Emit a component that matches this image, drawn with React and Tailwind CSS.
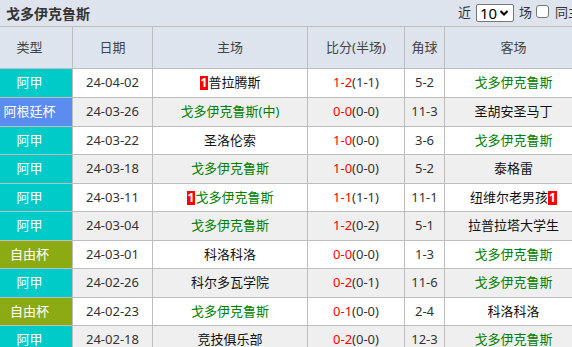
import React from 'react';

const GREEN = 'text-[#008000]';

const rows = [
  { type: '阿甲', date: '24-04-02', home: '普拉腾斯', homeBadge: true, score: '1-2', half: '(1-1)', corner: '5-2', away: '戈多伊克鲁斯', awayGreen: true },
  { type: '阿根廷杯', date: '24-03-26', home: '戈多伊克鲁斯(中)', homeGreen: true, score: '0-0', half: '(0-0)', corner: '11-3', away: '圣胡安圣马丁' },
  { type: '阿甲', date: '24-03-22', home: '圣洛伦索', score: '1-0', half: '(0-0)', corner: '3-6', away: '戈多伊克鲁斯', awayGreen: true },
  { type: '阿甲', date: '24-03-18', home: '戈多伊克鲁斯', homeGreen: true, score: '1-0', half: '(0-0)', corner: '5-2', away: '泰格雷' },
  { type: '阿甲', date: '24-03-11', home: '戈多伊克鲁斯', homeGreen: true, homeBadge: true, score: '1-1', half: '(1-1)', corner: '11-1', away: '纽维尔老男孩', awayBadge: true },
  { type: '阿甲', date: '24-03-04', home: '戈多伊克鲁斯', homeGreen: true, score: '1-2', half: '(0-2)', corner: '5-1', away: '拉普拉塔大学生' },
  { type: '自由杯', date: '24-03-01', home: '科洛科洛', score: '0-0', half: '(0-0)', corner: '1-3', away: '戈多伊克鲁斯', awayGreen: true },
  { type: '阿甲', date: '24-02-26', home: '科尔多瓦学院', score: '0-2', half: '(0-1)', corner: '11-6', away: '戈多伊克鲁斯', awayGreen: true },
  { type: '自由杯', date: '24-02-23', home: '戈多伊克鲁斯', homeGreen: true, score: '0-1', half: '(0-0)', corner: '2-4', away: '科洛科洛' },
  { type: '阿甲', date: '24-02-18', home: '竞技俱乐部', score: '0-2', half: '(0-0)', corner: '12-3', away: '戈多伊克鲁斯', awayGreen: true },
];

// row heights incl. bottom border, matching the screenshot's 28.5px rhythm
const heights = ['h-[29px]', 'h-[29px]', 'h-[28px]', 'h-[29px]', 'h-[28px]', 'h-[29px]', 'h-[28px]', 'h-[29px]', 'h-[28px]', 'h-[28px]'];

const typeBg = {
  '阿甲': 'bg-[#00cbc9]',
  '阿根廷杯': 'bg-[#5b8cf0]',
  '自由杯': 'bg-[#8cab12]',
};

const Badge = () => (
  <span className="inline-block bg-[#ff0000] text-white font-bold text-[12px] leading-[14px] px-[1px]">1</span>
);

const cell = 'flex items-center justify-center border-r border-[#bdbdbd] h-full';

export default function App() {
  return (
    <div
      className="w-[572px] h-[347px] overflow-hidden bg-white text-[13px] text-[#333]"
      style={{ fontFamily: '"Noto Sans", "Noto Sans CJK SC", sans-serif' }}
    >
      <div className="w-[600px]">
        {/* title bar */}
        <div className="flex items-center h-[27px] bg-[#dde4ee] border-b border-[#bdbdbd] pl-[6px] pr-[6px]">
          <span className="font-bold text-[#333] text-[14px]">戈多伊克鲁斯</span>
          <div className="ml-auto flex items-center whitespace-nowrap text-[#333]">
            <span>近</span>
            <span className="ml-[5px] flex items-center h-[18px] w-[38px] bg-white border border-[#767676] rounded-[2px] pl-[3px] text-[15px] text-black">
              10
              <svg className="ml-[2px]" width="10" height="8" viewBox="0 0 10 8">
                <path d="M1.5 2 L5 5.5 L8.5 2" fill="none" stroke="#000" strokeWidth="2" />
              </svg>
            </span>
            <span className="ml-[5px]">场</span>
            <span className="ml-[4px] inline-block w-[13px] h-[13px] bg-white border border-[#767676] rounded-[3px] -mt-[4px]" />
            <span className="ml-[6px]">同主客</span>
          </div>
        </div>

        {/* header */}
        <div className="flex h-[42px] bg-[#dde4ee] border-b border-[#bdbdbd] text-[#444]">
          <div className={`${cell} w-[73px] pr-[13px]`}>类型</div>
          <div className={`${cell} w-[80px]`}>日期</div>
          <div className={`${cell} w-[155px]`}>主场</div>
          <div className={`${cell} w-[97px]`}>比分(半场)</div>
          <div className={`${cell} w-[40px]`}>角球</div>
          <div className={`${cell} w-[138px]`}>客场</div>
        </div>

        {/* rows */}
        {rows.map((r, i) => (
          <div
            key={i}
            className={`flex ${heights[i]} border-b border-[#bdbdbd] ${i % 2 === 1 ? 'bg-[#efefef]' : 'bg-white'}`}
          >
            <div className={`${cell} w-[73px] pr-[13px] text-white ${typeBg[r.type]}`}>{r.type}</div>
            <div className={`${cell} w-[80px] text-[#333]`}>{r.date}</div>
            <div className={`${cell} w-[155px] ${r.homeGreen ? GREEN : 'text-[#111]'}`}>
              {r.homeBadge && <Badge />}
              <span>{r.home}</span>
            </div>
            <div className={`${cell} w-[97px]`}>
              <span className="text-[#ff0000]">{r.score}</span>
              <span className="text-[#333]">{r.half}</span>
            </div>
            <div className={`${cell} w-[40px] text-[#333]`}>{r.corner}</div>
            <div className={`${cell} w-[138px] ${r.awayGreen ? GREEN : 'text-[#111]'}`}>
              <span>{r.away}</span>
              {r.awayBadge && <Badge />}
            </div>
          </div>
        ))}
      </div>
    </div>
  );
}
